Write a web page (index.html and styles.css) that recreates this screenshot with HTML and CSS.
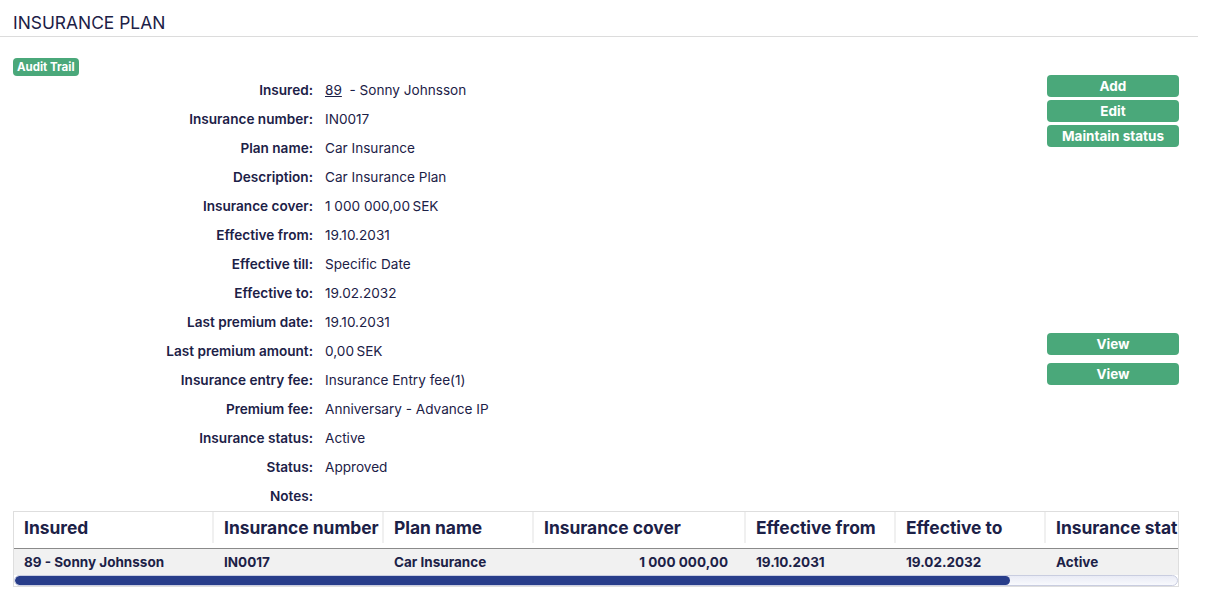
FILE: index.html
```html
<!DOCTYPE html>
<html>
<head>
<meta charset="utf-8">
<link rel="stylesheet" href="styles.css">
</head>
<body>
<div class="header"><h1 class="title">INSURANCE PLAN</h1></div>
<div class="main">
  <div class="left">
    <span class="badge">Audit Trail</span>
    <div class="details">
      <div class="row"><span class="lbl">Insured:</span><span class="val"><a class="link">89</a> &nbsp;- Sonny Johnsson</span></div>
      <div class="row"><span class="lbl">Insurance number:</span><span class="val">IN0017</span></div>
      <div class="row"><span class="lbl">Plan name:</span><span class="val">Car Insurance</span></div>
      <div class="row"><span class="lbl">Description:</span><span class="val">Car Insurance Plan</span></div>
      <div class="row"><span class="lbl">Insurance cover:</span><span class="val">1 000 000,00&#8201;SEK</span></div>
      <div class="row"><span class="lbl">Effective from:</span><span class="val">19.10.2031</span></div>
      <div class="row"><span class="lbl">Effective till:</span><span class="val">Specific Date</span></div>
      <div class="row"><span class="lbl">Effective to:</span><span class="val">19.02.2032</span></div>
      <div class="row"><span class="lbl">Last premium date:</span><span class="val">19.10.2031</span></div>
      <div class="row"><span class="lbl">Last premium amount:</span><span class="val">0,00&#8201;SEK</span></div>
      <div class="row"><span class="lbl">Insurance entry fee:</span><span class="val">Insurance Entry fee(1)</span></div>
      <div class="row"><span class="lbl">Premium fee:</span><span class="val">Anniversary - Advance IP</span></div>
      <div class="row"><span class="lbl">Insurance status:</span><span class="val">Active</span></div>
      <div class="row"><span class="lbl">Status:</span><span class="val">Approved</span></div>
      <div class="row"><span class="lbl">Notes:</span><span class="val"></span></div>
    </div>
  </div>
  <div class="actions">
    <div class="group top">
      <button class="btn">Add</button>
      <button class="btn">Edit</button>
      <button class="btn">Maintain status</button>
    </div>
    <div class="group views">
      <button class="btn">View</button>
      <button class="btn">View</button>
    </div>
  </div>
</div>
<div class="table">
  <div class="grid head">
    <div class="th">Insured</div>
    <div class="th">Insurance number</div>
    <div class="th">Plan name</div>
    <div class="th">Insurance cover</div>
    <div class="th">Effective from</div>
    <div class="th">Effective to</div>
    <div class="th">Insurance status</div>
  </div>
  <div class="grid body">
    <div class="td">89 - Sonny Johnsson</div>
    <div class="td">IN0017</div>
    <div class="td">Car Insurance</div>
    <div class="td num">1 000 000,00</div>
    <div class="td">19.10.2031</div>
    <div class="td">19.02.2032</div>
    <div class="td">Active</div>
  </div>
  <div class="scroll"><div class="thumb"></div></div>
</div>
</body>
</html>
```

FILE: styles.css
```css
* { box-sizing: border-box; }
body {
  margin: 0;
  font-family: Inter, "Noto Sans", sans-serif;
  color: #1c2147;
  background: #fff;
  width: 1206px;
  height: 591px;
  overflow: hidden;
}
.header {
  width: 1198px;
  border-bottom: 1px solid #dcdcdc;
  padding: 12px 13px 0;
  height: 37px;
}
.title {
  margin: 0;
  font-size: 17.4px;
  font-weight: 400;
  line-height: 21px;
}
.main {
  display: flex;
  padding: 21px 0 0 13px;
  width: 1179px;
}
.left { flex: 1; }
.badge {
  display: block;
  width: max-content;
  background: #4aa87a;
  color: #fff;
  font-size: 11.5px;
  font-weight: 700;
  height: 18px;
  line-height: 18px;
  padding: 0 4px;
  border-radius: 4px;
}
.details { display: flex; flex-direction: column; margin-top: -1px; }
.row {
  display: flex;
  height: 29px;
  align-items: center;
  font-size: 13.6px;
}
.lbl {
  width: 300px;
  text-align: right;
  font-weight: 600;
}
.val { padding-left: 12px; font-weight: 400; }
.link { text-decoration: underline; color: inherit; }
.actions {
  width: 132px;
  display: flex;
  flex-direction: column;
  padding-top: 17px;
}
.group { display: flex; flex-direction: column; }
.top { gap: 3px; }
.views { gap: 8px; margin-top: 186px; }
.btn {
  height: 22px;
  border: none;
  border-radius: 4px;
  background: #4aa87a;
  color: #fff;
  font-family: Inter, "Noto Sans", sans-serif;
  font-size: 13.5px;
  font-weight: 700;
  padding: 0;
  line-height: 22px;
}
.table {
  margin: 1px 0 0 13px;
  width: 1166px;
  border: 1px solid #dedede;
  overflow: hidden;
}
.grid {
  display: grid;
  grid-template-columns: 200px 170px 150px 212px 150px 150px 200px;
  width: max-content;
}
.head {
  height: 37px;
  border-bottom: 1px solid #8a8a8a;
}
.th {
  font-size: 17.4px;
  font-weight: 700;
  padding: 0 10px;
  line-height: 31px;
  height: 31px;
  border-right: 2px solid #f0f0f0;
  white-space: nowrap;
  overflow: hidden;
}
.body {
  background: #f1f1f1;
  height: 26px;
  width: 100%;
}
.td {
  font-size: 13.5px;
  font-weight: 700;
  padding: 0 10px;
  line-height: 26px;
  white-space: nowrap;
}
.num { text-align: right; padding-right: 18px; }
.scroll {
  height: 11px;
  border: 1px solid #c9cde0;
  border-radius: 6px;
  background: linear-gradient(#e9ebf5, #f8f9fd);
  overflow: hidden;
}
.thumb {
  width: 995px;
  height: 100%;
  background: #283d8a;
  border-radius: 6px;
}
```
